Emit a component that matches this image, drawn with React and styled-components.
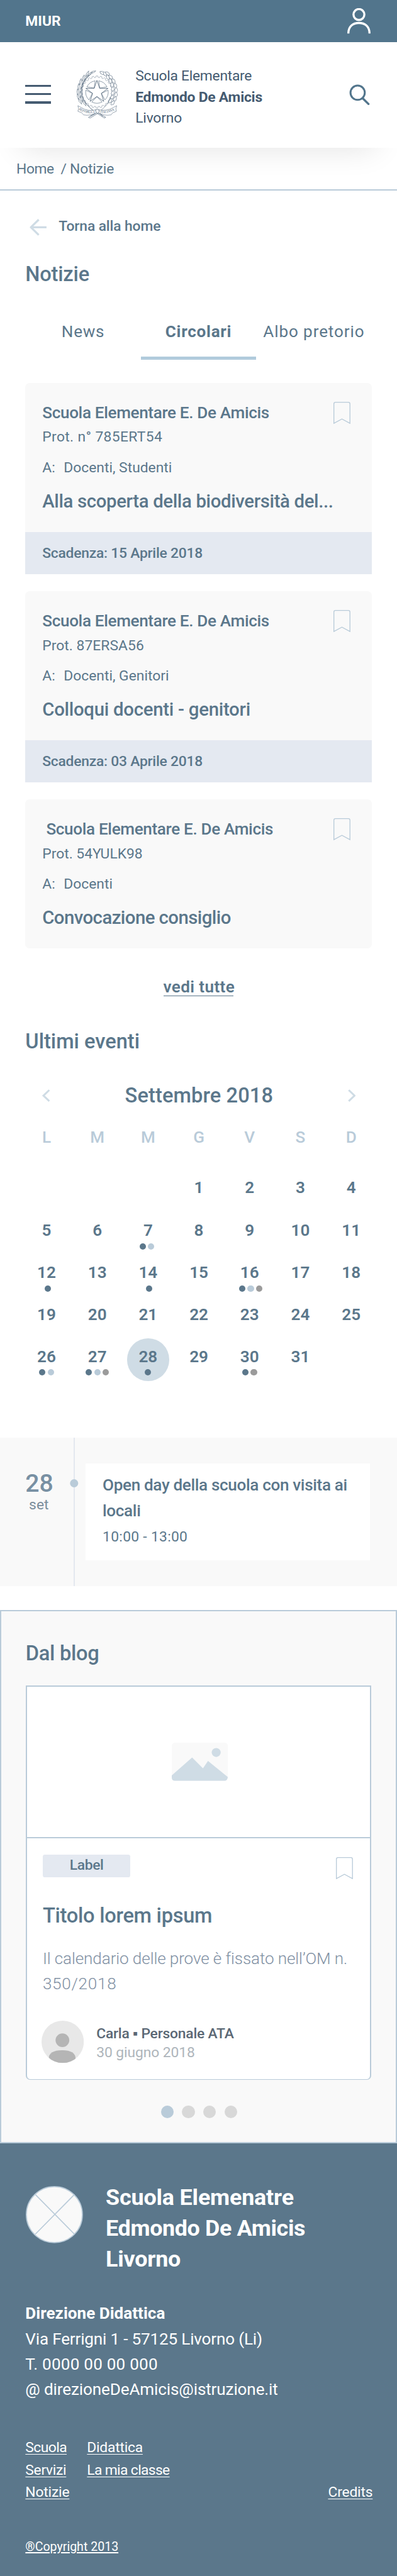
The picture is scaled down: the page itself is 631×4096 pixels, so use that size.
import React from "react";
import styled, { createGlobalStyle, css } from "styled-components";

const SCALE = 0.8407;
const u = (n) => `${(n * SCALE).toFixed(2)}px`;

const c = {
  bar: "#52758c",
  footer: "#5b778b",
  text: "#5b778b",
  ink: "#455b71",
  line: "#b9cbd9",
  pale: "#cfdce5",
  panel: "#f9f9f9",
  tag: "#e4e9f1",
  grey: "#9b9b9b",
};

const GlobalStyle = createGlobalStyle`
  *, *::before, *::after { box-sizing: border-box; }
  body { margin: 0; background: #fff; }
  svg { display: block; flex: none; }
`;

const type = (size, weight = 400, line = size) => css`
  font-size: ${u(size * 0.97)};
  font-weight: ${weight};
  line-height: ${u(line)};
`;
const track = css`
  letter-spacing: ${(p) => p.$track || 0}em;
`;

const Page = styled.div`
  width: 100%;
  height: 4096px;
  overflow: hidden;
  background: #fff;
  color: ${c.text};
  font-family: Roboto, "Liberation Sans", sans-serif;
  white-space: nowrap;
`;

/* ---------- header ---------- */
const TopBar = styled.div`
  display: flex;
  align-items: center;
  justify-content: space-between;
  height: ${u(80)};
  padding: 0 ${u(50)} 0 ${u(48)};
  background: ${c.bar};
  color: #fff;
`;
const Ministry = styled.span`
  ${type(28, 700, 32)}
  margin-top: ${u(3)};
`;
const Header = styled.header`
  display: flex;
  align-items: flex-start;
  height: ${u(200)};
  padding: 0 ${u(50)} 0 ${u(48)};
  background: #fff;
  box-shadow: 0 ${u(40)} ${u(60)} -${u(40)} rgba(0, 0, 0, 0.12);
`;
const MenuButton = styled.div`
  display: flex;
  flex-direction: column;
  gap: ${u(12)};
  width: ${u(48)};
  margin: ${u(80)} ${u(48)} 0 0;
`;
const MenuLine = styled.span`
  height: ${u(4)};
  background: ${c.ink};
`;
const EmblemBox = styled.div`
  width: ${u(80)};
  margin: ${u(53.3)} ${u(32)} 0 0;
`;
const School = styled.div`
  flex: 1;
  margin-top: ${u(43.7)};
  color: ${c.ink};
`;
const SchoolLine = styled.div`
  ${(p) => type(28, p.$bold ? 700 : 400, 40)}
  ${track}
`;
const SearchButton = styled.div`
  margin: ${u(79)} ${u(1)} 0 0;
`;
const Breadcrumb = styled.nav`
  display: flex;
  height: ${u(80)};
  padding: ${u(2)} 0 0 ${u(31)};
  border-bottom: 2px solid ${c.line};
`;
const Crumb = styled.span`
  ${type(28, 400, 77)}
  ${track}
`;
const Slash = styled(Crumb)`
  margin: 0 ${u(6)} 0 ${u(13)};
`;

/* ---------- shared ---------- */
const Main = styled.main`
  padding: 0 ${u(48)};
`;
const BackLink = styled.div`
  display: flex;
  align-items: center;
  gap: ${u(23)};
  margin: ${u(54)} 0 0 ${u(8)};
`;
const BackText = styled.span`
  ${type(28, 500, 32)}
  ${track}
  margin-top: ${u(-1.5)};
`;
const Heading = styled.h2`
  ${type(40, 500, 48)}
  ${track}
  margin: ${(p) => u(p.$top)} 0 0;
`;

/* ---------- tabs ---------- */
const Tabs = styled.div`
  display: grid;
  grid-template-columns: repeat(3, 1fr);
  height: ${u(102)};
  margin-top: ${u(31)};
`;
const Tab = styled.div`
  ${(p) => type(32, p.$active ? 700 : 400, 96)}
  ${track}
  padding-top: ${u(5)};
  text-align: center;
  border-bottom: 5px solid ${(p) => (p.$active ? "#b1cbdc" : "transparent")};
`;

/* ---------- circulars ---------- */
const CardList = styled.div`
  display: flex;
  flex-direction: column;
  gap: ${u(32)};
  margin-top: ${u(48)};
`;
const Card = styled.article`
  background: ${c.panel};
  border-radius: ${(p) => (p.$open ? `${u(8)} ${u(8)} 0 0` : u(8))};
`;
const CardBody = styled.div`
  display: flex;
  justify-content: space-between;
  height: ${u(282)};
  padding: 0 ${u(40)} 0 ${u(32)};
`;
const CardInfo = styled.div`
  width: 0;
  padding-top: ${u(37.4)};
`;
const CardTitle = styled.div`
  ${type(32, 500, 40)}
  ${track}
`;
const Protocol = styled.div`
  ${type(28, 400, 32)}
  ${track}
  margin-top: ${u(10.3)};
`;
const Recipients = styled.div`
  display: flex;
  ${type(28, 400, 32)}
  ${track}
  margin-top: ${u(25.5)};
`;
const To = styled.span`
  flex: none;
  width: ${u(40.5)};
`;
const Subject = styled.div`
  ${type(36, 500, 44)}
  ${track}
  margin-top: ${u(25.4)};
`;
const BookmarkSlot = styled.div`
  margin-top: ${(p) => u(p.$top)};
`;
const Deadline = styled.div`
  ${type(28, 500, 80)}
  letter-spacing: -0.01em;
  padding-left: ${u(32)};
  background: ${c.tag};
`;
const MoreLink = styled.a`
  ${type(32, 600, 32)}
  letter-spacing: 0.014em;
  display: block;
  width: ${u(133)};
  margin: ${u(57.4)} auto 0;
  border-bottom: 1px solid ${c.text};
`;

/* ---------- calendar ---------- */
const MonthRow = styled.div`
  display: flex;
  align-items: center;
  justify-content: space-between;
  height: ${u(48)};
  margin-top: ${u(54.5)};
  padding: 0 ${u(30)} 0 ${u(32)};
`;
const MonthName = styled.div`
  ${type(40, 500, 48)}
  letter-spacing: 0.003em;
`;
const WeekGrid = styled.div`
  display: grid;
  grid-template-columns: repeat(7, ${u(96)});
  margin: ${(p) => u(p.$top)} 0 0 ${u(-8)};
  text-align: center;
`;
const WeekDay = styled.div`
  ${type(32, 500, 40)}
  color: ${c.line};
`;
const DayCell = styled.div`
  display: flex;
  flex-direction: column;
  align-items: center;
  width: ${u(80)};
  height: ${u(80)};
  margin: 0 auto;
  padding-top: ${u(15.4)};
  border-radius: 50%;
  background: ${(p) => (p.$today ? c.pale : "none")};
`;
const DayNumber = styled.div`
  ${type(32, 600, 40)}
`;
const Dots = styled.div`
  display: flex;
  gap: ${u(4)};
  margin-top: ${(p) => u(p.$top)};
  padding-left: ${(p) => u(Math.max(0, p.$shift * 2))};
  padding-right: ${(p) => u(Math.max(0, -p.$shift * 2))};
`;
const Dot = styled.span`
  width: ${u(12)};
  height: ${u(12)};
  border-radius: 50%;
  background: ${(p) => p.$color};
`;

/* ---------- event ---------- */
const EventStrip = styled.section`
  display: flex;
  height: ${u(280)};
  margin-top: ${u(108)};
  padding-left: ${u(48)};
  background: ${c.panel};
`;
const EventDate = styled.div`
  flex: none;
  width: ${u(51)};
  padding-top: ${u(62.1)};
  text-align: center;
`;
const EventDay = styled.div`
  ${type(48, 500, 48)}
  color: #7890a3;
`;
const EventMonth = styled.div`
  ${type(28, 400, 28)}
  color: #7b8d9c;
  margin-top: ${u(2.6)};
`;
const Timeline = styled.div`
  position: relative;
  flex: none;
  width: 2px;
  margin: 0 ${u(20.6)} 0 ${u(40)};
  background: #e4e8f0;
`;
const TimelineDot = styled.span`
  position: absolute;
  left: 50%;
  top: ${u(78)};
  width: ${u(16)};
  height: ${u(16)};
  border-radius: 50%;
  background: ${c.line};
  transform: translateX(-50%);
`;
const EventCard = styled.div`
  flex: none;
  width: ${u(538)};
  height: ${u(184)};
  margin-top: ${u(48)};
  padding: ${u(17.4)} 0 0 ${u(32)};
  background: #fff;
`;
const EventTitle = styled.div`
  ${type(32, 500, 48)}
  letter-spacing: -0.013em;
`;
const EventTime = styled.div`
  ${type(28, 400, 32)}
  letter-spacing: 0.013em;
  margin-top: ${u(10)};
`;

/* ---------- blog ---------- */
const Blog = styled.section`
  height: ${u(1008)};
  margin-top: ${u(46)};
  padding: 0 ${u(46)};
  background: ${c.panel};
  border: 2px solid ${c.line};
`;
const Post = styled.article`
  height: ${u(745.5)};
  margin-top: ${u(37.2)};
  background: #fff;
  border: 2px solid ${c.line};
  border-bottom-width: 1px;
  border-radius: 0 0 ${u(8)} ${u(8)};
`;
const PostImage = styled.div`
  display: flex;
  align-items: center;
  justify-content: center;
  height: ${u(286)};
  padding-left: ${u(4)};
  border-bottom: 2px solid ${c.line};
`;
const PostBody = styled.div`
  padding: 0 ${u(33)} 0 ${u(30)};
`;
const PostHead = styled.div`
  display: flex;
  justify-content: space-between;
  height: ${u(74)};
`;
const Tag = styled.span`
  ${type(28, 500, 41)}
  letter-spacing: -0.015em;
  width: ${u(166)};
  height: ${u(42)};
  margin-top: ${u(32)};
  background: ${c.tag};
  border-radius: ${u(4)};
  text-align: center;
`;
const PostTitle = styled.h3`
  ${type(40, 500, 48)}
  letter-spacing: -0.008em;
  margin: ${u(48.8)} 0 0;
`;
const Excerpt = styled.p`
  ${type(32, 300, 48)}
  margin: ${u(32.6)} 0 0;
  letter-spacing: -0.004em;
  color: #7f90a3;
`;
const ExcerptTail = styled.span`
  letter-spacing: 0.028em;
`;
const Author = styled.div`
  display: flex;
  gap: ${u(24)};
  margin: ${u(46.6)} 0 0 ${u(-2.5)};
`;
const AuthorText = styled.div`
  padding-top: ${u(6.7)};
`;
const AuthorName = styled.div`
  ${type(28, 500, 36)}
  letter-spacing: -0.009em;
  color: #5b6875;
`;
const PostDate = styled.div`
  ${type(28, 400, 36)}
  letter-spacing: -0.004em;
  color: #aeb5bb;
`;
const Pager = styled.div`
  display: flex;
  justify-content: center;
  gap: ${u(16)};
  margin: ${u(48.5)} 0 0 ${u(2)};
`;
const PagerDot = styled.span`
  width: ${u(24)};
  height: ${u(24)};
  border-radius: 50%;
  background: ${(p) => (p.$active ? c.line : "#d8d8d8")};
`;

/* ---------- footer ---------- */
const Footer = styled.footer`
  height: ${u(820)};
  padding: 0 ${u(46)} 0 ${u(48)};
  background: ${c.footer};
  color: #fff;
`;
const FooterHead = styled.div`
  display: flex;
  gap: ${u(43)};
  padding: ${u(74.4)} 0 0 ${u(1)};
`;
const LogoBox = styled.div`
  margin-top: ${u(6.6)};
`;
const FooterTitle = styled.div`
  ${type(44, 700, 58)}
`;
const Spaced = styled.div`
  ${track}
`;
const Address = styled.address`
  ${type(32, 400, 48)}
  font-style: normal;
  margin-top: ${u(49.5)};
`;
const Office = styled.div`
  font-weight: 700;
`;
const FooterNav = styled.nav`
  display: grid;
  grid-template-columns: ${u(116.5)} 1fr auto;
  align-items: end;
  margin-top: ${u(64.8)};
`;
const NavColumn = styled.div`
  display: flex;
  flex-direction: column;
  align-items: flex-start;
  align-self: ${(p) => (p.$end ? "end" : "start")};
`;
const NavLink = styled.a`
  ${type(28, 400, 42)}
  ${track}
  text-decoration: underline;
  text-decoration-thickness: 1px;
  text-underline-offset: ${u(3.5)};
`;
const Copyright = styled.div`
  ${type(24, 400, 32)}
  margin-top: ${u(67.4)};
  text-decoration: underline;
  text-decoration-thickness: 2px;
  text-underline-offset: ${u(2.5)};
`;

/* ---------- drawings ---------- */
const Svg = ({ w, h, box, children }) => (
  <svg width={w * SCALE} height={h * SCALE} viewBox={box || `0 0 ${w} ${h}`} fill="none">
    {children}
  </svg>
);

const UserIcon = () => (
  <Svg w={44} h={48}>
    <circle cx="22" cy="12" r="10.3" stroke="#fff" strokeWidth="4" />
    <path d="M2 48C2 34 11 28 22 28S42 34 42 48" stroke="#fff" strokeWidth="4" />
  </Svg>
);
const SearchIcon = () => (
  <Svg w={40} h={40}>
    <circle cx="16" cy="16" r="13.5" stroke={c.bar} strokeWidth="3.6" />
    <path d="M25.5 26.5L36.5 37.3" stroke={c.bar} strokeWidth="4" strokeLinecap="round" />
  </Svg>
);
const ArrowIcon = () => (
  <Svg w={32} h={32}>
    <path d="M32 16H2.5M17.3 1.5L2.5 16L17.3 30.5" stroke={c.pale} strokeWidth="3.8" strokeLinejoin="round" />
  </Svg>
);
const Chevron = ({ next }) => (
  <Svg w={15} h={24}>
    <path d={next ? "M1.5 1.5L12.5 12L1.5 22.5" : "M13.5 1.5L2.5 12L13.5 22.5"} stroke={c.pale} strokeWidth="3.6" />
  </Svg>
);
const Bookmark = () => (
  <Svg w={32} h={42}>
    <path d="M0.8 40.6V3.8Q0.8 0.8 3.8 0.8H28.2Q31.2 0.8 31.2 3.8V40.6L16 32.3Z" stroke={c.line} strokeWidth="1.6" />
  </Svg>
);
const Placeholder = () => (
  <Svg w={106} h={72}>
    <rect width="106" height="72" rx="6" fill={c.panel} />
    <circle cx="84" cy="18.5" r="8.5" fill={c.pale} />
    <path d="M0 62L38.5 28L59 48.5L68.5 34.5L106 65Q105 72 100 72H6Q0 72 0 66Z" fill={c.pale} />
  </Svg>
);
const Avatar = () => (
  <Svg w={80} h={80}>
    <clipPath id="avatar">
      <circle cx="40" cy="40" r="40" />
    </clipPath>
    <g clipPath="url(#avatar)">
      <rect width="80" height="80" fill="#e8e8e8" />
      <circle cx="39.5" cy="37" r="13" fill="#b5b5b5" />
      <path d="M13.5 72Q14 56 39 56T64.5 72V80H13.5Z" fill="#b5b5b5" />
    </g>
  </Svg>
);
const FooterLogo = () => (
  <Svg w={108} h={108}>
    <circle cx="54" cy="54" r="53" fill={c.panel} stroke={c.line} strokeWidth="2" />
    <path d="M18 16L92 91M92 16L18 91" stroke={c.line} strokeWidth="2" />
  </Svg>
);

const polar = (r, deg, cx = 160, cy = 162) => {
  const a = (deg * Math.PI) / 180;
  return `${(cx + r * Math.sin(a)).toFixed(1)} ${(cy - r * Math.cos(a)).toFixed(1)}`;
};
const star = Array.from({ length: 10 }, (_, i) => polar(i % 2 ? 26 : 66, i * 36)).join("L");
const sectors = [0, 1, 2, 3, 4].map((i) => {
  const a = i * 72 + 36;
  return `M${polar(64, a - 27)}A64 64 0 0 1 ${polar(64, a + 27)}L${polar(33, a + 9)}L${polar(27, a)}L${polar(33, a - 9)}Z`;
});
const gear = Array.from({ length: 24 }, (_, i) => {
  const a = i * 15;
  return `${polar(83, a - 4.5)}L${polar(91, a - 3)}L${polar(91, a + 3)}L${polar(83, a + 4.5)}`;
}).join("L");
const laurel = [
  [135, 50, 68], [118, 62, 52], [104, 60, 30], [100, 82, 42], [82, 84, 20], [84, 106, 34], [66, 106, 12],
  [74, 130, 26], [56, 134, 4], [68, 154, 16], [51, 164, -4], [66, 178, 2], [54, 192, -16], [74, 204, -16],
  [64, 216, -32], [88, 226, -34],
];
const oak = [
  [190, 54, -60], [206, 60, -40], [220, 58, -50], [222, 78, -20], [238, 78, -44], [236, 100, -10],
  [254, 100, -30], [246, 122, -6], [264, 126, -14], [250, 146, 6], [269, 152, 0], [250, 168, 14], [268, 178, 8],
  [246, 192, 24], [262, 202, 22], [236, 212, 36], [250, 224, 40],
];
const Emblem = () => (
  <Svg w={80} h={90.7} box="42 40 240 272">
    <g stroke={c.ink} strokeWidth="1.9" strokeLinejoin="round">
      <path d={`M${star}Z`} strokeWidth="2.8" />
      {sectors.map((d) => (
        <path key={d} d={d} strokeWidth="2.1" />
      ))}
      <path d={`M${gear}Z`} strokeWidth="1.4" />
      {laurel.map(([x, y, a], i) => (
        <g key={i} transform={`translate(${x} ${y}) rotate(${a})`}>
          <path d="M0 -20Q9 -4 0 18Q-9 -4 0 -20Z" fill="#fff" strokeWidth="1.9" />
        </g>
      ))}
      <path d="M128 58Q62 100 76 180Q86 230 150 276" strokeWidth="3" />
      {oak.map(([x, y, a], i) => (
        <g key={i} transform={`translate(${x} ${y}) rotate(${a})`}>
          <path d="M0 -15Q6 -13 4 -8Q11 -6 7 0Q11 5 5 8Q4 14 0 15Q-4 14 -5 8Q-11 5 -7 0Q-11 -6 -4 -8Q-6 -13 0 -15Z" fill="#fff" strokeWidth="1.9" />
        </g>
      ))}
      <path d="M236 190Q224 242 168 276" strokeWidth="2" />
      <path d="M52 240L70 250Q110 276 160 262L166 278Q120 300 84 292L74 280L52 272Q60 258 52 240Z" fill="#fff" />
      <path d="M272 240L254 250Q214 274 164 262L160 278Q204 300 240 292L250 280L270 272Q264 258 272 240Z" fill="#fff" />
      <path d="M152 264Q162 256 172 264Q176 276 166 284Q154 282 152 264ZM156 282L112 306L120 311L164 284M168 282L210 306L202 310L162 284M150 284L122 300M178 284L192 300" fill="#fff" strokeWidth="2.4" />
    </g>
    <path id="ribbon-left" d="M57 264Q104 290 154 280" />
    <path id="ribbon-right" d="M178 281Q220 286 268 262" />
    <g fill={c.ink} fontFamily='"Liberation Serif", serif' fontSize="19">
      <text>
        <textPath href="#ribbon-left" textLength="96" lengthAdjust="spacingAndGlyphs">REPVBBLICA</textPath>
      </text>
      <text>
        <textPath href="#ribbon-right" textLength="84" lengthAdjust="spacingAndGlyphs">ITALIANA</textPath>
      </text>
    </g>
  </Svg>
);

/* ---------- data ---------- */
const circulars = [
  {
    title: "Scuola Elementare E. De Amicis",
    protocol: "Prot. n° 785ERT54", protocolTrack: 0.016,
    to: "Docenti, Studenti",
    subject: "Alla scoperta della biodiversità del...", subjectTrack: -0.012,
    deadline: "Scadenza: 15 Aprile 2018",
  },
  {
    title: "Scuola Elementare E. De Amicis",
    protocol: "Prot. 87ERSA56", protocolTrack: 0.002,
    to: "Docenti, Genitori",
    subject: "Colloqui docenti - genitori", subjectTrack: -0.009,
    deadline: "Scadenza: 03 Aprile 2018",
  },
  {
    title: "\u00a0Scuola Elementare E. De Amicis",
    protocol: "Prot. 54YULK98", protocolTrack: 0,
    to: "Docenti",
    subject: "Convocazione consiglio", subjectTrack: -0.019,
  },
];

const A = c.text;
const B = c.line;
const D = c.grey;
const marks = {
  7: { dots: [A, B], shift: -2 },
  12: { dots: [A], shift: 2 },
  14: { dots: [A], shift: 2 },
  16: { dots: [A, B, D], shift: 2 },
  26: { dots: [A, B], shift: 0 },
  27: { dots: [A, B, D], shift: 0 },
  28: { dots: [A], shift: 0 },
  30: { dots: [A, D], shift: 0 },
};
const days = [null, null, null, ...Array.from({ length: 31 }, (_, i) => i + 1)];

export default function App() {
  return (
    <Page>
      <GlobalStyle />
      <TopBar>
        <Ministry>MIUR</Ministry>
        <UserIcon />
      </TopBar>
      <Header>
        <MenuButton>
          <MenuLine />
          <MenuLine />
          <MenuLine />
        </MenuButton>
        <EmblemBox>
          <Emblem />
        </EmblemBox>
        <School>
          <SchoolLine $track={-0.012}>Scuola Elementare</SchoolLine>
          <SchoolLine $bold $track={-0.01}>Edmondo De Amicis</SchoolLine>
          <SchoolLine $track={-0.008}>Livorno</SchoolLine>
        </School>
        <SearchButton>
          <SearchIcon />
        </SearchButton>
      </Header>
      <Breadcrumb>
        <Crumb $track={-0.02}>Home</Crumb>
        <Slash>/</Slash>
        <Crumb $track={-0.008}>Notizie</Crumb>
      </Breadcrumb>

      <Main>
        <BackLink>
          <ArrowIcon />
          <BackText $track={-0.005}>Torna alla home</BackText>
        </BackLink>
        <Heading $top={49} $track={-0.006}>Notizie</Heading>
        <Tabs>
          <Tab $track={0.028}>News</Tab>
          <Tab $active $track={0.028}>Circolari</Tab>
          <Tab $track={0.034}>Albo pretorio</Tab>
        </Tabs>

        <CardList>
          {circulars.map((item) => (
            <Card key={item.protocol} $open={!!item.deadline}>
              <CardBody>
                <CardInfo>
                  <CardTitle $track={-0.013}>{item.title}</CardTitle>
                  <Protocol $track={item.protocolTrack}>{item.protocol}</Protocol>
                  <Recipients>
                    <To>A:</To>
                    {item.to}
                  </Recipients>
                  <Subject $track={item.subjectTrack}>{item.subject}</Subject>
                </CardInfo>
                <BookmarkSlot $top={36}>
                  <Bookmark />
                </BookmarkSlot>
              </CardBody>
              {item.deadline && <Deadline>{item.deadline}</Deadline>}
            </Card>
          ))}
        </CardList>
        <MoreLink>vedi tutte</MoreLink>

        <Heading $top={61.6}>Ultimi eventi</Heading>
        <MonthRow>
          <Chevron />
          <MonthName>Settembre 2018</MonthName>
          <Chevron next />
        </MonthRow>
        <WeekGrid $top={34.6}>
          {["L", "M", "M", "G", "V", "S", "D"].map((d, i) => (
            <WeekDay key={i}>{d}</WeekDay>
          ))}
        </WeekGrid>
        <WeekGrid $top={40.6}>
          {days.map((day, i) => (
            <DayCell key={i} $today={day === 28}>
              {day && <DayNumber>{day}</DayNumber>}
              {marks[day] && (
                <Dots $top={day > 25 ? 2 : 4.2} $shift={marks[day].shift}>
                  {marks[day].dots.map((color) => (
                    <Dot key={color} $color={color} />
                  ))}
                </Dots>
              )}
            </DayCell>
          ))}
        </WeekGrid>
      </Main>

      <EventStrip>
        <EventDate>
          <EventDay>28</EventDay>
          <EventMonth>set</EventMonth>
        </EventDate>
        <Timeline>
          <TimelineDot />
        </Timeline>
        <EventCard>
          <EventTitle>
            Open day della scuola con visita ai
            <br />
            locali
          </EventTitle>
          <EventTime>10:00 - 13:00</EventTime>
        </EventCard>
      </EventStrip>

      <Blog>
        <Heading $top={54.8} $track={-0.008}>Dal blog</Heading>
        <Post>
          <PostImage>
            <Placeholder />
          </PostImage>
          <PostBody>
            <PostHead>
              <Tag>Label</Tag>
              <BookmarkSlot $top={36}>
                <Bookmark />
              </BookmarkSlot>
            </PostHead>
            <PostTitle>Titolo lorem ipsum</PostTitle>
            <Excerpt>
              Il calendario delle prove è fissato nell’OM n.
              <br />
              <ExcerptTail>350/2018</ExcerptTail>
            </Excerpt>
            <Author>
              <Avatar />
              <AuthorText>
                <AuthorName>Carla ▪ Personale ATA</AuthorName>
                <PostDate>30 giugno 2018</PostDate>
              </AuthorText>
            </Author>
          </PostBody>
        </Post>
        <Pager>
          <PagerDot $active />
          <PagerDot />
          <PagerDot />
          <PagerDot />
        </Pager>
      </Blog>

      <Footer>
        <FooterHead>
          <LogoBox>
            <FooterLogo />
          </LogoBox>
          <FooterTitle>
            <Spaced $track={-0.005}>Scuola Elemenatre</Spaced>
            <Spaced $track={-0.01}>Edmondo De Amicis</Spaced>
            <Spaced $track={-0.006}>Livorno</Spaced>
          </FooterTitle>
        </FooterHead>
        <Address>
          <Office>Direzione Didattica</Office>
          <Spaced $track={-0.007}>Via Ferrigni 1 - 57125 Livorno (Li)</Spaced>
          <Spaced $track={0.008}>T. 0000 00 00 000</Spaced>
          <Spaced $track={-0.005}>@ direzioneDeAmicis@istruzione.it</Spaced>
        </Address>
        <FooterNav>
          <NavColumn>
            <NavLink $track={-0.025}>Scuola</NavLink>
            <NavLink $track={-0.0135}>Servizi</NavLink>
            <NavLink $track={-0.008}>Notizie</NavLink>
          </NavColumn>
          <NavColumn>
            <NavLink $track={-0.01}>Didattica</NavLink>
            <NavLink $track={-0.028}>La mia classe</NavLink>
          </NavColumn>
          <NavColumn $end>
            <NavLink $track={-0.008}>Credits</NavLink>
          </NavColumn>
        </FooterNav>
        <Copyright>®Copyright 2013</Copyright>
      </Footer>
    </Page>
  );
}
